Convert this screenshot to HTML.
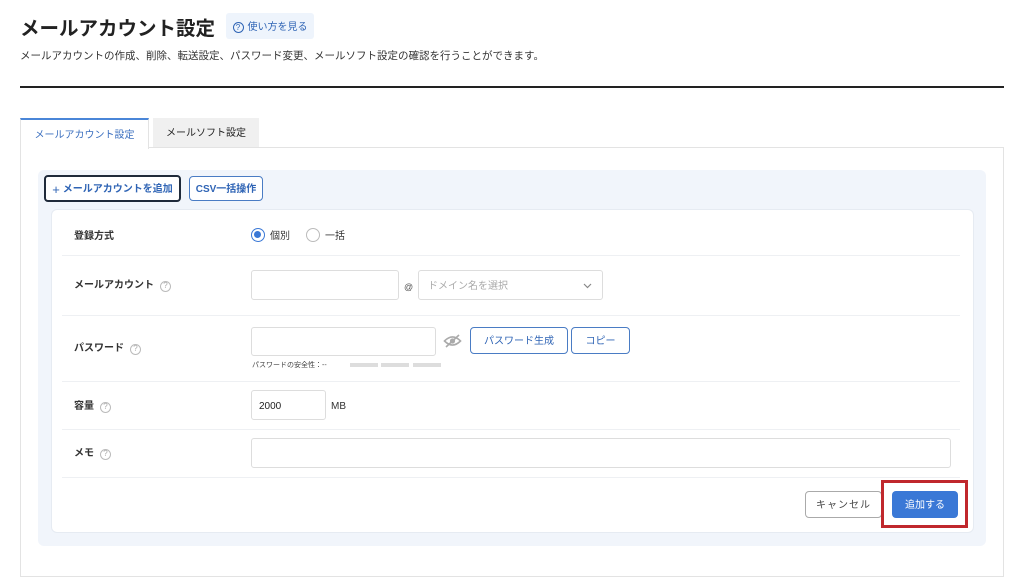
<!DOCTYPE html>
<html><head><meta charset="utf-8"><style>
*{box-sizing:border-box;margin:0;padding:0}
body{width:1024px;height:567px;background:#fff;font-family:"Liberation Sans","Noto Sans CJK JP",sans-serif;color:#222;position:relative;overflow:hidden}
.a{position:absolute}
.f{display:flex;align-items:center;justify-content:center;line-height:1;padding-top:3px}
.inp{position:absolute;border:1px solid #ddd;border-radius:3px;background:#fff}
.lbl{position:absolute;left:74px;font-size:10px;font-weight:bold;color:#333;line-height:12px;display:flex;align-items:center}
.q{display:inline-flex;align-items:center;justify-content:center;width:11px;height:11px;border:1px solid #bbb;border-radius:50%;font-size:8px;color:#aaa;margin-left:6px;font-weight:normal;line-height:1}
.sep{position:absolute;left:62px;width:898px;height:1px;background:#eef0f3}
.btn{position:absolute;border:1px solid #4a7cc4;border-radius:4px;color:#2f64b5;font-size:10px;font-weight:bold;background:#fff;display:flex;align-items:center;justify-content:center;line-height:1;padding-top:3px}
</style></head><body>
<div class="a" style="left:20px;top:17px;font-size:19.5px;font-weight:bold;color:#222;line-height:24px">メールアカウント設定</div>
<div class="a f" style="left:226px;top:13px;width:88px;height:26px;background:#eef4fc;border-radius:3px;font-size:10px;color:#2f64b5"><span class="f" style="width:11px;height:11px;border:1.2px solid #2f64b5;border-radius:50%;font-size:8px;margin-right:4px;padding-top:1px">?</span>使い方を見る</div>
<div class="a" style="left:20px;top:50px;font-size:10.5px;color:#333;line-height:12px;white-space:nowrap">メールアカウントの作成、削除、転送設定、パスワード変更、メールソフト設定の確認を行うことができます。</div>
<div class="a" style="left:20px;top:86px;width:984px;height:2px;background:#222"></div>
<div class="a" style="left:20px;top:147px;width:984px;height:430px;border:1px solid #e3e3e3"></div>
<div class="a f" style="left:20px;top:118px;width:129px;height:31px;background:#fff;border:1px solid #e3e3e3;border-top:2px solid #4a86d8;border-bottom:none;font-size:10px;color:#3b6fbf">メールアカウント設定</div>
<div class="a f" style="left:153px;top:118px;width:106px;height:29px;background:#f0f0f0;font-size:10px;color:#222">メールソフト設定</div>
<div class="a" style="left:38px;top:170px;width:948px;height:376px;background:#f1f5fb;border-radius:6px"></div>
<div class="a f" style="left:44px;top:175px;width:137px;height:27px;border:2px solid #1f2a3a;border-radius:4px;background:#fff;font-size:10px;font-weight:bold;color:#2f64b5"><span style="font-size:13px;font-weight:normal;margin-right:3px;margin-top:-2px">+</span>メールアカウントを追加</div>
<div class="btn" style="left:189px;top:176px;width:74px;height:25px">CSV一括操作</div>
<div class="a" style="left:51px;top:209px;width:923px;height:324px;background:#fff;border-radius:6px;border:1px solid #e6ebf2"></div>
<div class="lbl" style="top:231px">登録方式</div>
<div class="a" style="left:251px;top:228px;width:14px;height:14px;border:1.5px solid #3a78d6;border-radius:50%"><div style="width:7px;height:7px;background:#3a78d6;border-radius:50%;margin:2px"></div></div>
<div class="a" style="left:270px;top:231px;font-size:10px;color:#333;line-height:12px">個別</div>
<div class="a" style="left:306px;top:228px;width:14px;height:14px;border:1px solid #bbb;border-radius:50%"></div>
<div class="a" style="left:325px;top:231px;font-size:10px;color:#333;line-height:12px">一括</div>
<div class="sep" style="top:255px"></div>
<div class="lbl" style="top:280px">メールアカウント<span class="q">?</span></div>
<div class="inp" style="left:251px;top:270px;width:148px;height:30px"></div>
<div class="a" style="left:404px;top:281px;font-size:9px;color:#555;line-height:12px">@</div>
<div class="inp" style="left:418px;top:270px;width:185px;height:30px;font-size:10px;color:#aaa;display:flex;align-items:center;padding-left:9px;padding-top:3px;line-height:1">ドメイン名を選択<svg style="position:absolute;right:10px;top:12px" width="9" height="6" viewBox="0 0 9 6"><path d="M1 1 L4.5 4.5 L8 1" fill="none" stroke="#888" stroke-width="1.2"/></svg></div>
<div class="sep" style="top:315px"></div>
<div class="lbl" style="top:343px">パスワード<span class="q">?</span></div>
<div class="inp" style="left:251px;top:327px;width:185px;height:29px"></div>
<svg class="a" style="left:443px;top:333px" width="19" height="16" viewBox="0 0 19 16"><path d="M1.5 8 Q9.5 0 17.5 8 Q9.5 16 1.5 8Z" fill="none" stroke="#aaa" stroke-width="1.6"/><circle cx="9.5" cy="8" r="2.6" fill="#aaa"/><line x1="3" y1="14" x2="16" y2="2" stroke="#aaa" stroke-width="1.6"/></svg>
<div class="btn" style="left:470px;top:327px;width:98px;height:27px;font-weight:normal">パスワード生成</div>
<div class="btn" style="left:571px;top:327px;width:59px;height:27px;font-weight:normal">コピー</div>
<div class="a" style="left:252px;top:361px;font-size:7px;color:#444;line-height:9px">パスワードの安全性：--</div>
<div class="a" style="left:350px;top:363px;width:28px;height:4px;background:#ddd"></div>
<div class="a" style="left:381px;top:363px;width:28px;height:4px;background:#ddd"></div>
<div class="a" style="left:413px;top:363px;width:28px;height:4px;background:#ddd"></div>
<div class="sep" style="top:381px"></div>
<div class="lbl" style="top:401px">容量<span class="q">?</span></div>
<div class="inp" style="left:251px;top:390px;width:75px;height:30px;font-size:10px;display:flex;align-items:center;padding-left:7px;padding-top:3px;color:#222;line-height:1">2000</div>
<div class="a" style="left:331px;top:401px;font-size:10px;color:#333;line-height:12px">MB</div>
<div class="sep" style="top:429px"></div>
<div class="lbl" style="top:448px">メモ<span class="q">?</span></div>
<div class="inp" style="left:251px;top:438px;width:700px;height:30px"></div>
<div class="sep" style="top:477px"></div>
<div class="a f" style="left:805px;top:491px;width:77px;height:27px;border:1px solid #aaa;border-radius:4px;font-size:10px;color:#444;letter-spacing:1px">キャンセル</div>
<div class="a" style="left:881px;top:480px;width:87px;height:48px;border:3px solid #c0282d"></div>
<div class="a f" style="left:892px;top:491px;width:66px;height:27px;background:#3a78d6;border-radius:4px;font-size:10px;color:#fff">追加する</div>
</body></html>
